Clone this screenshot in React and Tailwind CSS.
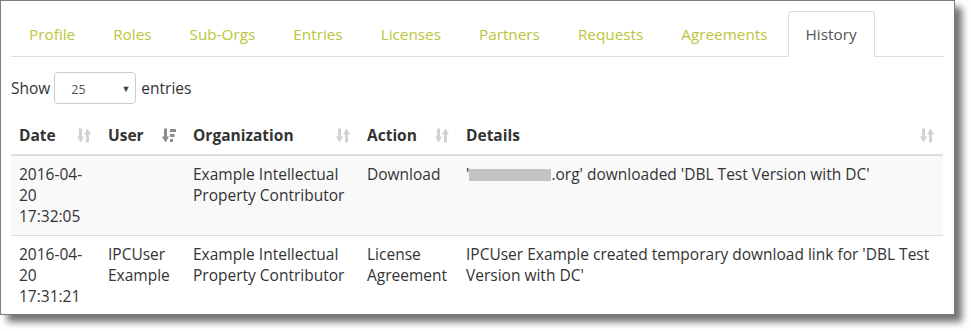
import React from "react";

const tabs = ["Profile", "Roles", "Sub-Orgs", "Entries", "Licenses", "Partners", "Requests", "Agreements", "History"];

// Sort arrows drawn like the glyphicon sort icons
const SortBoth = () => (
  <svg width="14" height="15" viewBox="0 0 14 15" className="shrink-0">
    <g fill="#d2d2d2">
      <rect x="2" y="0.5" width="3" height="9" />
      <polygon points="0,8.5 7,8.5 3.5,14.5" />
      <polygon points="7,6.5 14,6.5 10.5,0.5" />
      <rect x="9" y="5.5" width="3" height="9" />
    </g>
  </svg>
);

const SortDesc = () => (
  <svg width="14" height="15" viewBox="0 0 14 15" className="shrink-0">
    <g fill="#8c8c8c">
      <rect x="2" y="0.5" width="3" height="9" />
      <polygon points="0,8.5 7,8.5 3.5,14.5" />
      <rect x="8" y="1" width="6" height="3" />
      <rect x="8" y="6" width="4.5" height="3" />
      <rect x="8" y="11" width="3" height="3" />
    </g>
  </svg>
);

const columns = [
  { label: "Date", width: "w-[89px]", icon: <SortBoth /> },
  { label: "User", width: "w-[85px]", icon: <SortDesc /> },
  { label: "Organization", width: "w-[174px]", icon: <SortBoth /> },
  { label: "Action", width: "w-[99px]", icon: <SortBoth /> },
  { label: "Details", width: "", icon: <SortBoth /> },
];

export default function App() {
  return (
    <div className="bg-white w-[971px] h-[331px] font-['Open_Sans',sans-serif] text-[#333] text-[15.5px] leading-[21px]">
      <div className="w-[955px] h-[315px] border border-[#7d7d7d] bg-white overflow-hidden shadow-[7px_7px_7px_rgba(0,0,0,0.55)] pt-[10px] px-[10px]">
        {/* Tabs */}
        <div className="flex border-b border-[#ddd] text-[15.3px]">
          {tabs.map((t) =>
            t === "History" ? (
              <div
                key={t}
                className="mr-[2px] -mb-px border border-[#ddd] border-b-white bg-white rounded-t-[4px] px-[17px] pt-[12px] pb-[11px] text-[#555]"
              >
                {t}
              </div>
            ) : (
              <div
                key={t}
                className="mr-[2px] -mb-px border border-transparent px-[17px] pt-[12px] pb-[11px] text-[#b9c63b]"
              >
                {t}
              </div>
            )
          )}
        </div>

        {/* Show entries */}
        <div className="flex items-center mt-[15px] h-[32px]">
          <span>Show</span>
          <div className="ml-[4px] mr-[5px] w-[82px] h-[32px] border border-[#ccc] rounded-[4px] flex items-center justify-between pl-[16px] pr-[5px] text-[12.5px] text-[#555]">
            <span className="pt-[3px]">25</span>
            <span className="text-[9px] text-[#444]">▼</span>
          </div>
          <span>entries</span>
        </div>

        {/* Table */}
        <table className="mt-[13px] w-[932px] table-fixed border-collapse">
          <thead>
            <tr>
              {columns.map((c) => (
                <th
                  key={c.label}
                  className={`${c.width} border-b-2 border-[#ddd] pl-[8px] pr-[9px] py-[8px] text-left font-bold align-bottom`}
                >
                  <div className="flex items-center justify-between">
                    <span>{c.label}</span>
                    {c.icon}
                  </div>
                </th>
              ))}
            </tr>
          </thead>
          <tbody>
            <tr className="bg-[#f9f9f9]">
              <td className="p-[8px] align-top">2016-04-20 17:32:05</td>
              <td className="p-[8px] align-top"></td>
              <td className="p-[8px] align-top">Example Intellectual Property Contributor</td>
              <td className="p-[8px] align-top">Download</td>
              <td className="p-[8px] align-top">
                '<span className="inline-block align-middle w-[82px] h-[12px] bg-[#c4c4c4] mb-[2px]"></span>.org' downloaded 'DBL Test Version with DC'
              </td>
            </tr>
            <tr className="border-t border-[#ddd]">
              <td className="p-[8px] align-top">2016-04-20 17:31:21</td>
              <td className="p-[8px] align-top">IPCUser Example</td>
              <td className="p-[8px] align-top">Example Intellectual Property Contributor</td>
              <td className="p-[8px] align-top">License Agreement</td>
              <td className="p-[8px] align-top">
                IPCUser Example created temporary download link for 'DBL Test Version with DC'
              </td>
            </tr>
          </tbody>
        </table>
      </div>
    </div>
  );
}
